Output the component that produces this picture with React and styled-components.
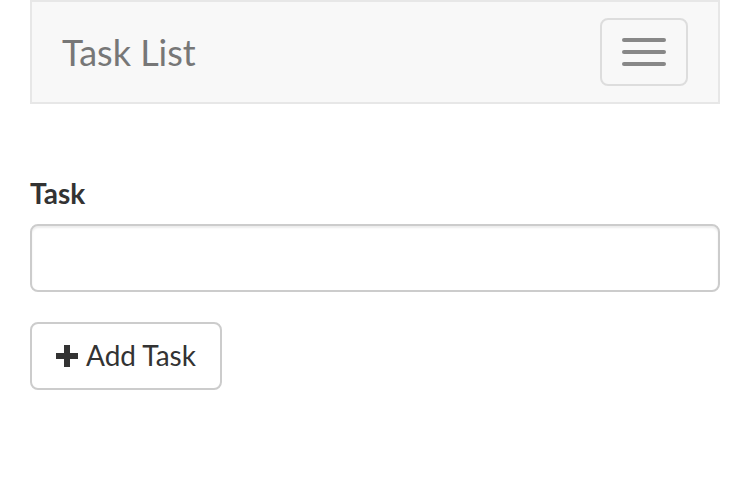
import React from "react";
import styled, { createGlobalStyle } from "styled-components";

const GlobalStyle = createGlobalStyle`
  * { box-sizing: border-box; }
  html, body {
    margin: 0;
    padding: 0;
    background: #fff;
  }
  body {
    font-family: Lato, "Helvetica Neue", Helvetica, Arial, sans-serif;
    font-size: 28px;
    line-height: 1.42857;
    color: #333;
  }
`;

export default () => (
  <>
    <GlobalStyle />
    <Container>
      <Navbar>
        <Brand>Task List</Brand>
        <Toggle aria-label="Toggle navigation">
          <Bar />
          <Bar />
          <Bar />
        </Toggle>
      </Navbar>
      <Form>
        <Group>
          <Label htmlFor="task">Task</Label>
          <Input id="task" type="text" />
        </Group>
        <Button>
          <PlusIcon />
          <span>Add Task</span>
        </Button>
      </Form>
    </Container>
  </>
);

const PlusIcon = () => (
  <svg width="22" height="22" viewBox="0 0 22 22" fill="#333">
    <path d="M8 0h6v8h8v6h-8v8h-6v-8h-8v-6h8z" />
  </svg>
);

const Container = styled.div`
  padding: 0 30px;
`;

const Navbar = styled.nav`
  display: flex;
  justify-content: space-between;
  align-items: flex-start;
  min-height: 100px;
  background: #f8f8f8;
  border: 2px solid #e7e7e7;
  margin-bottom: 40px;
`;

const Brand = styled.div`
  padding: 30px;
  font-size: 36px;
  line-height: 40px;
  color: #777;
`;

const Toggle = styled.button`
  display: flex;
  flex-direction: column;
  gap: 8px;
  margin: 16px 30px 16px 0;
  padding: 18px 20px;
  background: transparent;
  border: 2px solid #ddd;
  border-radius: 8px;
`;

const Bar = styled.span`
  display: block;
  width: 44px;
  height: 4px;
  border-radius: 2px;
  background: #888;
`;

const Form = styled.form`
  padding-top: 30px;
`;

const Group = styled.div`
  margin-bottom: 30px;
`;

const Label = styled.label`
  display: block;
  margin-bottom: 10px;
  font-weight: 700;
`;

const Input = styled.input`
  display: block;
  width: 100%;
  height: 68px;
  padding: 12px 24px;
  font: inherit;
  color: #555;
  background: #fff;
  border: 2px solid #ccc;
  border-radius: 8px;
  box-shadow: inset 0 2px 2px rgba(0, 0, 0, 0.075);
`;

const Button = styled.button`
  display: inline-flex;
  align-items: center;
  gap: 8px;
  height: 68px;
  padding: 12px 24px;
  font: inherit;
  color: #333;
  background: #fff;
  border: 2px solid #ccc;
  border-radius: 8px;
`;
